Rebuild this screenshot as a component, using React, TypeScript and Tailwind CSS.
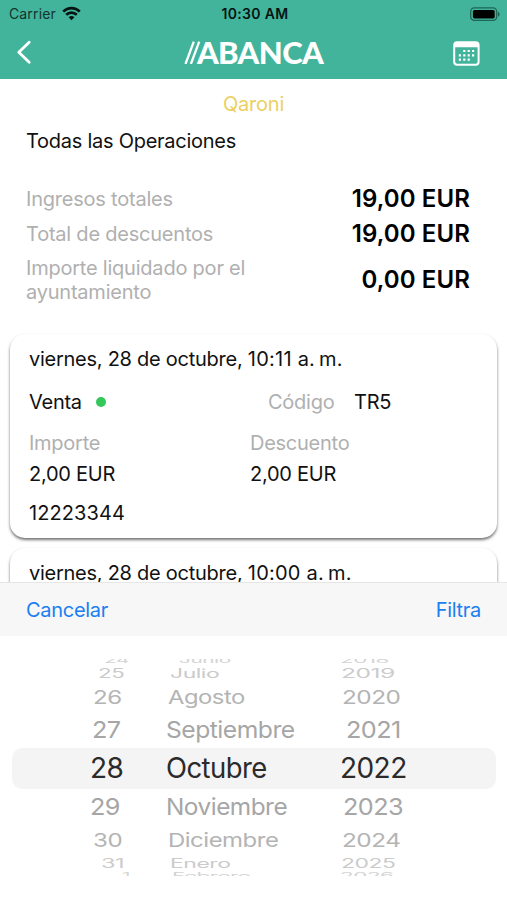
interface PickerCell {
  text: string
  x: number
  sx: number
}

interface PickerRow {
  height: number
  scaleY: number
  tone: string
  offset?: number
  cells: PickerCell[]
}

const totals = [
  { label: 'Ingresos totales', value: '19,00 EUR', row: 'h-[35px]' },
  { label: 'Total de descuentos', value: '19,00 EUR', row: 'h-9' },
  { label: 'Importe liquidado por el ayuntamiento', value: '0,00 EUR', row: 'h-[55px]' },
]

// The wheel gets flatter towards its top and bottom edges
const rows: PickerRow[] = [
  { height: 6, scaleY: 0.3, tone: 'text-[#d4d4d4]', offset: -2, cells: [{ text: '24', x: 104, sx: 0.74 }, { text: 'Junio', x: 179, sx: 0.74 }, { text: '2018', x: 340, sx: 0.8 }] },
  { height: 16, scaleY: 0.45, tone: 'text-[#cbcbcb]', cells: [{ text: '25', x: 98, sx: 0.8 }, { text: 'Julio', x: 170, sx: 0.82 }, { text: '2019', x: 341, sx: 0.88 }] },
  { height: 32, scaleY: 0.68, tone: 'text-[#b4b4b4]', cells: [{ text: '26', x: 93, sx: 0.86 }, { text: 'Agosto', x: 168, sx: 0.85 }, { text: '2020', x: 342, sx: 0.87 }] },
  { height: 34, scaleY: 0.84, tone: 'text-[#a6a6a6]', cells: [{ text: '27', x: 92, sx: 0.9 }, { text: 'Septiembre', x: 166, sx: 0.88 }, { text: '2021', x: 346, sx: 0.9 }] },
  { height: 42, scaleY: 1, tone: 'text-[#2b2b2b]', cells: [{ text: '28', x: 90, sx: 1 }, { text: 'Octubre', x: 166, sx: 0.98 }, { text: '2022', x: 340, sx: 1 }] },
  { height: 35, scaleY: 0.84, tone: 'text-[#a6a6a6]', cells: [{ text: '29', x: 90, sx: 0.9 }, { text: 'Noviembre', x: 166, sx: 0.87 }, { text: '2023', x: 343, sx: 0.9 }] },
  { height: 31, scaleY: 0.68, tone: 'text-[#b4b4b4]', cells: [{ text: '30', x: 93, sx: 0.86 }, { text: 'Diciembre', x: 168, sx: 0.855 }, { text: '2024', x: 342, sx: 0.87 }] },
  { height: 16, scaleY: 0.45, tone: 'text-[#cbcbcb]', cells: [{ text: '31', x: 101, sx: 0.84 }, { text: 'Enero', x: 170, sx: 0.82 }, { text: '2025', x: 341, sx: 0.82 }] },
  { height: 6, scaleY: 0.3, tone: 'text-[#d4d4d4]', offset: 2, cells: [{ text: '1', x: 122, sx: 0.74 }, { text: 'Febrero', x: 172, sx: 0.8 }, { text: '2026', x: 340, sx: 0.8 }] },
]

function StatusBar() {
  return (
    <div className="flex h-[27px] items-center justify-between pr-[6px] pl-[9px] text-black">
      <div className="flex w-[160px] items-center gap-[6px]">
        <span className="text-[14px] tracking-[0.01em] text-[#12332c]">Carrier</span>
        <svg width="19" height="15" viewBox="0 0 19 15" fill="none" stroke="#061512" strokeWidth="2.6">
          <path d="M1.2 5.6C6 .9 13 .9 17.8 5.6" />
          <path d="M4.2 8.8C7.2 5.9 11.8 5.9 14.8 8.8" />
          <path d="M6.6 11.2C8.4 9.6 10.6 9.6 12.4 11.2L9.5 14.2Z" fill="#061512" stroke="none" />
        </svg>
      </div>
      <span className="text-[14px] font-semibold tracking-[0.025em] text-[#061512]">10:30 AM</span>
      <div className="flex w-[160px] justify-end">
        <svg width="32" height="14" viewBox="0 0 32 14">
          <rect x="1.7" y=".9" width="26" height="12.4" rx="3.6" fill="none" stroke="#1f6555" strokeWidth="1.3" />
          <rect x="3.9" y="3" width="21.8" height="8.4" rx="1.6" fill="#000" />
          <path d="M29 4.7C31.2 5.5 31.2 8.7 29 9.5Z" fill="#1f6555" />
        </svg>
      </div>
    </div>
  )
}

function NavBar() {
  return (
    <div className="flex h-[52px] items-center justify-between pr-[27px] pl-4 text-white">
      <div className="w-[100px]">
        <svg width="16" height="26" viewBox="0 0 16 26" fill="none" stroke="currentColor" strokeWidth="2.8" strokeLinecap="round" strokeLinejoin="round">
          <path d="M13.2 2.3L2.8 12.3L13.2 22.3" />
        </svg>
      </div>
      <div className="flex items-center pb-[3px]">
        <svg width="17" height="24" viewBox="0 0 17 24" fill="none" stroke="currentColor" strokeWidth="2.3">
          <path d="M1.5 24L9.8 1.6M6.9 24L15.2 1.6" />
        </svg>
        <span className="-ml-[4px] font-[Lato] text-[31px] leading-[24px] font-black tracking-[-0.02em]">ABANCA</span>
      </div>
      <div className="flex w-[89px] justify-end">
        <svg width="27" height="25" viewBox="0 0 27 25">
          <rect x="1.2" y="1.2" width="24.4" height="22.6" rx="3" fill="none" stroke="#fff" strokeWidth="2" />
          <path d="M1 6.3V4Q1 1 4 1H23Q26 1 26 4V6.3Z" fill="#fff" />
          <g fill="#fff">
            <path d="M10.2 8.9h2.2v2.2h-2.2zM14.6 8.9h2.2v2.2h-2.2zM19 8.9h2.2v2.2H19z" />
            <path d="M5.8 13.2H8v2.2H5.8zM10.2 13.2h2.2v2.2h-2.2zM14.6 13.2h2.2v2.2h-2.2zM19 13.2h2.2v2.2H19z" />
            <path d="M5.8 17.5H8v2.2H5.8zM10.2 17.5h2.2v2.2h-2.2zM14.6 17.5h2.2v2.2h-2.2z" />
          </g>
        </svg>
      </div>
    </div>
  )
}

function OperationCard({ day, time }: { day: string; time: string }) {
  return (
    <div className="h-[204px] shrink-0 rounded-[15px] bg-white px-[19px] pt-[13px] text-[20px] leading-6 tracking-[-0.013em] whitespace-nowrap text-[#111] shadow-[0_2px_3px_rgba(0,0,0,0.55)]">
      <p>
        {day}, <span className="tracking-[0.012em]">{time}</span>
      </p>
      <div className="mt-[19px] flex items-center">
        <span className="w-[67px]">Venta</span>
        <span className="size-[10px] rounded-full bg-[#34c759]" />
        <span className="ml-[162px] w-[86px] text-[#b0b0b0]">Código</span>
        <span>TR5</span>
      </div>
      <div className="mt-[17px] grid grid-cols-[221px_1fr] gap-y-[7px]">
        <span className="text-[#b0b0b0]">Importe</span>
        <span className="text-[#b0b0b0]">Descuento</span>
        <span>2,00 EUR</span>
        <span>2,00 EUR</span>
      </div>
      <p className="mt-[15px] tracking-[0.004em]">12223344</p>
    </div>
  )
}

function DatePicker() {
  return (
    <div className="relative h-[264px] bg-white pt-[23px] text-[28px] tracking-[-0.02em]">
      <div className="absolute top-[112px] left-3 h-[41px] w-[484px] rounded-[10px] bg-[#f4f4f4]" />
      <div className="relative h-[217px] overflow-hidden">
        {rows.map((row) => (
          <div key={row.cells[2].text} className={`relative ${row.tone}`} style={{ height: row.height, top: row.offset ?? 0 }}>
            {row.cells.map((cell) => (
              <span
                key={cell.text}
                className="absolute top-1/2 origin-left leading-none whitespace-nowrap"
                style={{ left: cell.x, transform: `translateY(-50%) scale(${cell.sx}, ${row.scaleY})` }}
              >
                {cell.text}
              </span>
            ))}
          </div>
        ))}
      </div>
    </div>
  )
}

export default function App() {
  return (
    <div className="flex h-[900px] w-[507px] flex-col overflow-hidden bg-white font-[Inter,sans-serif]">
      <header className="h-[79px] shrink-0 bg-[#43b49c]">
        <StatusBar />
        <NavBar />
      </header>

      <main className="h-[503px] shrink-0 overflow-hidden">
        <p className="mt-[13px] text-center text-[20px] leading-6 tracking-[-0.01em] text-[#ecd062]">Qaroni</p>
        <h1 className="mt-[13px] pl-[26px] text-[20px] leading-6 tracking-[-0.013em] text-[#111]">Todas las Operaciones</h1>

        <section className="mt-[28px] pr-[37px] pl-[26px]">
          {totals.map((total) => (
            <div key={total.label} className={`flex items-center justify-between ${total.row}`}>
              <span className="w-[240px] text-[20px] leading-6 tracking-[-0.011em] text-[#b0b0b0]">{total.label}</span>
              <span className="text-[24px] font-semibold tracking-[0.004em] text-black">{total.value}</span>
            </div>
          ))}
        </section>

        <section className="mt-[27px] flex flex-col gap-[10px] px-[10px]">
          <OperationCard day="viernes, 28 de octubre" time={'10:11 a.\u2009m.'} />
          <OperationCard day="viernes, 28 de octubre" time={'10:00 a.\u2009m.'} />
        </section>
      </main>

      <div className="flex h-[54px] shrink-0 items-center justify-between border-t border-[#e6e6e6] bg-[#f7f7f7] px-[26px] text-[20px] tracking-[-0.015em] text-[#1a7ff0]">
        <button>Cancelar</button>
        <button>Filtra</button>
      </div>

      <DatePicker />
    </div>
  )
}
